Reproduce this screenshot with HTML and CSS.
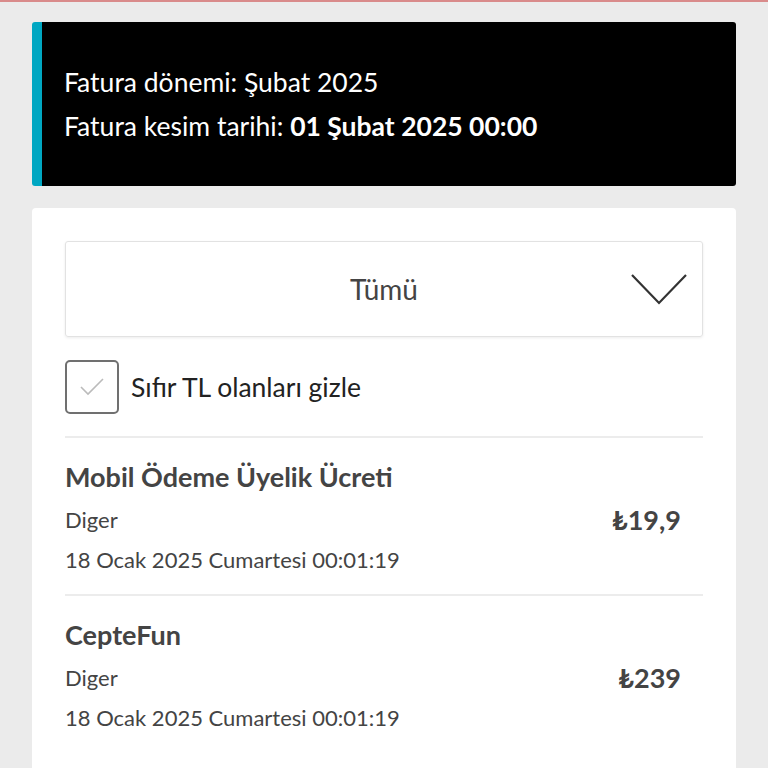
FILE: index.html
```html
<!DOCTYPE html>
<html lang="tr">
<head>
<meta charset="utf-8">
<link rel="stylesheet" href="styles.css">
</head>
<body>
<div class="topline"></div>
<div class="page">
  <section class="banner">
    <p class="banner-line">Fatura dönemi: Şubat 2025</p>
    <p class="banner-line">Fatura kesim tarihi: <b>01 Şubat 2025 00:00</b></p>
  </section>
  <section class="card">
    <div class="select">
      <span class="select-label">Tümü</span>
      <svg class="chevron" width="58" height="34" viewBox="0 0 58 34"><path d="M2 3 L29 31 L56 3" fill="none" stroke="#333" stroke-width="2.2"/></svg>
    </div>
    <label class="check-row">
      <span class="checkbox"><svg width="30" height="22" viewBox="0 0 30 22"><path d="M4 11 L11 18 L26 3" fill="none" stroke="#bbb" stroke-width="1.6"/></svg></span>
      <span class="check-label">Sıfır TL olanları gizle</span>
    </label>
    <div class="item">
      <div class="item-info">
        <div class="item-title">Mobil Ödeme Üyelik Ücreti</div>
        <div class="item-sub">Diger</div>
        <div class="item-sub">18 Ocak 2025 Cumartesi 00:01:19</div>
      </div>
      <div class="item-price">₺19,9</div>
    </div>
    <div class="item">
      <div class="item-info">
        <div class="item-title">CepteFun</div>
        <div class="item-sub">Diger</div>
        <div class="item-sub">18 Ocak 2025 Cumartesi 00:01:19</div>
      </div>
      <div class="item-price">₺239</div>
    </div>
  </section>
</div>
</body>
</html>
```
FILE: styles.css
```css
* { box-sizing: border-box; }
html, body { margin: 0; padding: 0; }
body {
  background: #ebebeb;
  font-family: Lato, "Noto Sans", sans-serif;
  color: #333;
  height: 768px;
  overflow: hidden;
}
.topline { height: 2px; background: #d98b8b; }
.page { padding: 20px 32px 0; display: flex; flex-direction: column; gap: 22px; }
.banner {
  background: #000;
  border-left: 10px solid #00a7c2;
  border-radius: 3px;
  height: 164px;
  padding: 0 0 0 22px;
  display: flex;
  flex-direction: column;
  justify-content: center;
  gap: 14px;
}
.banner-line { margin: 0; color: #fff; font-size: 26.5px; line-height: 30px; }
.banner-line b { font-weight: 700; }
.card {
  background: #fff;
  border-radius: 4px 4px 0 0;
  padding: 33px 33px 0;
  height: 600px;
}
.select {
  height: 96px;
  border: 1px solid #e2e2e2;
  border-radius: 3px;
  box-shadow: 0 1px 3px rgba(0,0,0,0.08);
  display: flex;
  align-items: center;
  justify-content: center;
  position: relative;
}
.select-label { font-size: 28px; color: #444; }
.chevron { position: absolute; right: 14px; top: 30px; }
.check-row {
  display: flex;
  align-items: center;
  gap: 12px;
  padding: 23px 0 22px;
  border-bottom: 2px solid #ececec;
}
.checkbox {
  width: 54px; height: 54px;
  border: 2px solid #707070;
  border-radius: 5px;
  display: flex; align-items: center; justify-content: center;
}
.check-label { font-size: 26.5px; color: #222; }
.item {
  display: flex;
  align-items: center;
  justify-content: space-between;
  padding: 20px 22px 14px 0;
  border-bottom: 2px solid #ececec;
}
.item:last-child { border-bottom: none; }
.item-title { font-size: 27px; font-weight: 700; color: #444; line-height: 38px; margin-bottom: 4px; }
.item-sub { font-size: 22px; color: #444; line-height: 40px; }
.item-price { font-size: 27px; font-weight: 700; color: #444; }
```
